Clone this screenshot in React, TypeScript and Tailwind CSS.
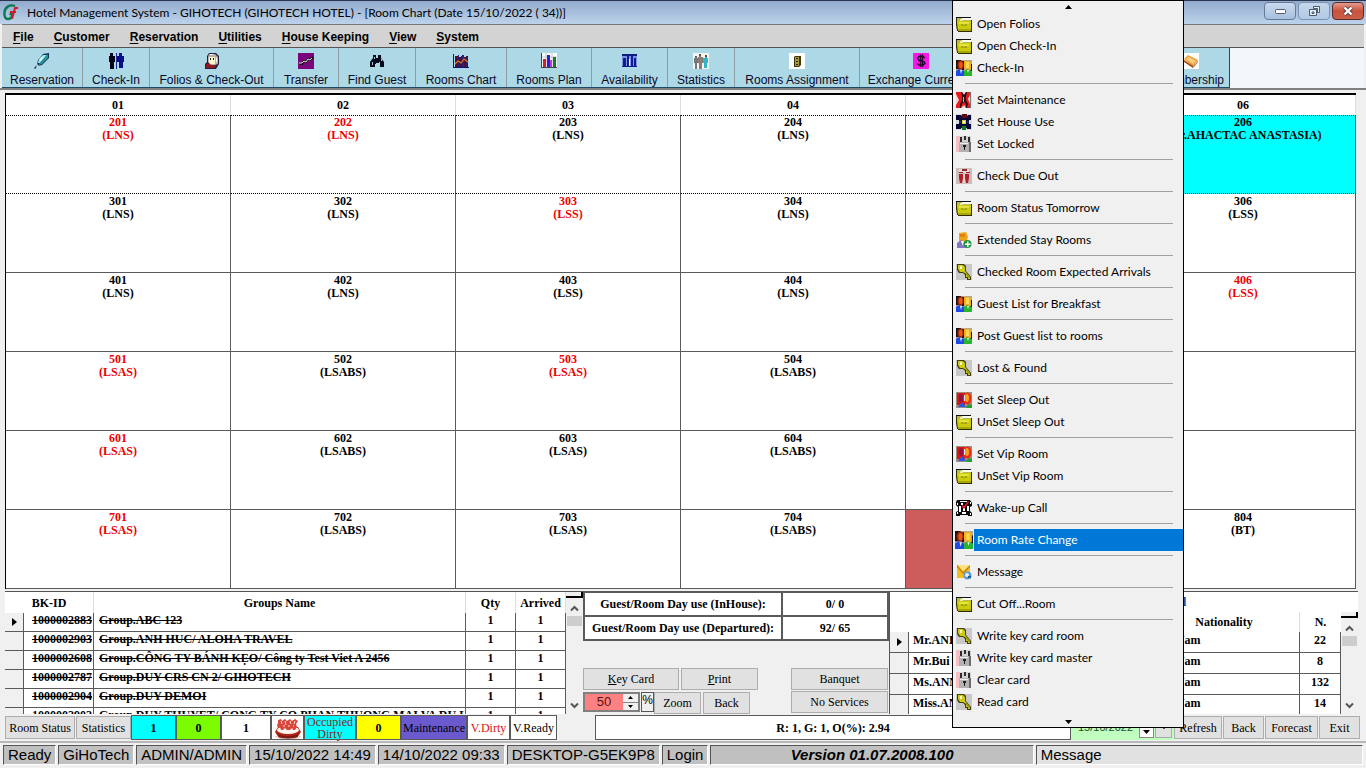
import React from "react";

type IconName =
  | "folder" | "people" | "tools" | "house" | "lock" | "due" | "extend"
  | "key" | "sleep" | "phone" | "mail";

function MenuIcon({ name, large }: { name: IconName; large?: boolean }) {
  const size = large ? 18 : 16;
  const common = { width: size, height: size, viewBox: "0 0 16 16", "aria-hidden": true } as const;
  switch (name) {
    case "folder":
      return (
        <svg {...common}>
          <path d="M0 1h15v1h-15z" fill="#101018" />
          <path d="M1 2h14v5h-14z" fill="#b9b84a" />
          <path d="M6 2h9v2h-9z" fill="#fdfdf0" />
          <path d="M4 3h3v2h-3z" fill="#e9e9b0" />
          <path d="M1 5h14v10h-13l-1-3z" fill="#cccb0e" />
          <path d="M3 6h10v2h-10z" fill="#e4e23c" />
          <path d="M0 2h1v5l1 8h-1l-1-6z" fill="#2f2f06" />
          <path d="M15 4h1v11h-1zM2 15h14v1h-14z" fill="#2f2f06" />
          <path d="M5 8h2v1h2v-1h2v2h-6z" fill="#a5a412" />
          <path d="M2 13h13v2h-13z" fill="#a8a70a" />
        </svg>
      );
    case "people":
      return (
        <svg {...common}>
          <path d="M0 0h16v16h-16z" fill="#b7a78e" />
          <path d="M0 0h5v4l-2 5h-3zM6 1h2v9h-2zM14 4h2v8h-2z" fill="#16110e" />
          <ellipse cx="4.500" cy="5" rx="3.200" ry="4.500" fill="#9c2506" />
          <ellipse cx="4.800" cy="5" rx="1.800" ry="3.200" fill="#e65a12" />
          <path d="M8 1h6l1 3v6h-6l-1-4z" fill="#f6b012" />
          <path d="M10 2h3v6h-3z" fill="#ffd75a" />
          <path d="M0 16v-5l3-2 5 2v5z" fill="#1d49e6" />
          <path d="M8 16v-5l3-2 5 2v5z" fill="#27b52d" />
          <path d="M4 10h2l-1 4zM11 10h2l-1 3z" fill="#e8f4ff" />
        </svg>
      );
    case "sleep":
      return (
        <svg {...common}>
          <path d="M0 0h16v16h-16z" fill="#9c8e86" />
          <path d="M1 1h8v12h-8z" fill="#d91712" />
          <ellipse cx="11.500" cy="6.500" rx="4" ry="6" fill="#e62f13" />
          <ellipse cx="11" cy="6" rx="2" ry="4" fill="#ff9e19" />
          <ellipse cx="5" cy="6" rx="2" ry="4" fill="#8b1740" />
          <path d="M2 15l4-5 4 5z" fill="#2757ea" />
          <path d="M10 15l3-3 3 1v3h-6z" fill="#239d34" />
          <path d="M8 3h1v6h-1z" fill="#dcdde8" />
        </svg>
      );
    case "tools":
      return (
        <svg {...common}>
          <path d="M0 0h16v16h-16z" fill="#f0d9da" />
          <path d="M0 0h6l2 3 2-3h4v3l-2 4 2 5v4h-4l-2-3-3 3h-5v-3l3-5-3-6z" fill="#ee1720" />
          <path d="M5 0h1l2 3 2-3h1l-1 5v3l2 4-1 4h-1v-4l-2-2-2 2-1 4h-1v-4l2-4v-4z" fill="#251012" />
          <path d="M7 5h1v5h-1z" fill="#e7a05a" />
          <path d="M14 0h1v16h-1z" fill="#777" />
        </svg>
      );
    case "house":
      return (
        <svg {...common}>
          <path d="M0 0h16v16h-16z" fill="#d9dade" />
          <path d="M0 1h5l1 1h5l1-1h3v5h-2v4h2v5h-4v-1h-6v1h-5v-5h3v-4h-3z" fill="#07073a" />
          <path d="M6 0h5v4h-5z" fill="#5d0b12" />
          <path d="M6 12h4v4h-4z" fill="#0e7a1d" />
          <path d="M6 6h4v4h-4z" fill="#d8d22c" />
          <path d="M7 7h2v2h-2z" fill="#fff" />
          <path d="M3 7h2v2h-2zM11 7h2v2h-2z" fill="#2a2a70" />
        </svg>
      );
    case "lock":
      return (
        <svg {...common}>
          <path d="M0 0h4v16h-4z" fill="#f6bfc3" />
          <path d="M4 0h11v6h-11z" fill="#d5d2d2" />
          <path d="M4 1h2v5h-2zM8 0h2v4h-2zM12 1h2v5h-2z" fill="#2d2d30" />
          <path d="M3 6h12v10h-12z" fill="#b3b1b1" />
          <path d="M4 7h8v1h-8z" fill="#eee" />
          <path d="M7 9h3v2h-1v3h-1v-3h-1z" fill="#1b1b1b" />
          <path d="M13 6h2v10h-2z" fill="#6d6b6b" />
        </svg>
      );
    case "due":
      return (
        <svg {...common}>
          <path d="M0 0h16v16h-16z" fill="#ccbcba" />
          <path d="M3 1h10v4h-10z" fill="#e5ddda" />
          <path d="M6 1h5v2h-5zM3 4h4v1h-4zM10 4h4v1h-4z" fill="#96272c" />
          <path d="M3 6h4v4l-1 5h-2l-1-5zM9 6h4v4l-1 5h-2l-1-5z" fill="#b02029" />
          <path d="M7 6h2v9h-2z" fill="#e7d3d0" />
        </svg>
      );
    case "extend":
      return (
        <svg {...common}>
          <path d="M3 1l7-1 2 5-2 6-7-1z" fill="#f2a313" />
          <path d="M4 2h5v3h-5z" fill="#e17f12" />
          <path d="M1 11l4-3 5 2v6h-9z" fill="#8475c9" />
          <path d="M5 9h3l-1 5z" fill="#fff" />
          <circle cx="11.500" cy="12" r="4" fill="#1f9640" />
          <path d="M11 9.500h1.500v2h2v1.500h-2v2h-1.500v-2h-2v-1.500h2z" fill="#fff" />
        </svg>
      );
    case "key":
      return (
        <svg {...common}>
          <path d="M0 0h16v16h-16z" fill="#c8c8ca" />
          <path d="M1 0h7l2 2v5l5 6v3h-4v-2h-2v-3l-2-2h-4l-2-3z" fill="#3f3f0a" />
          <path d="M2 1h5l2 2v4l5 6v2h-2v-2h-2v-3l-3-2h-3l-2-3z" fill="#cfca18" />
          <path d="M4 2h2v3h-2z" fill="#f6f5c6" />
          <path d="M10 9l4 5h-1l-4-5z" fill="#7f7b0e" />
        </svg>
      );
    case "phone":
      return (
        <svg {...common}>
          <path d="M1 0h13l2 3v3l-2 1v4l2 2v3h-4v-1h-8v1h-4v-4l2-1v-4l-2-2v-3z" fill="#0a0a0a" />
          <path d="M4 1h7v1h-7zM3 6h2v6h-2zM11 6h2v5h-2zM1 3h1v2h-1zM5 3h2v2h-2zM6 12h4v2h-4zM7 7h2v4h-2zM14 2h1v2h-1zM1 12h1v2h-1zM14 13h1v2h-1z" fill="#fff" />
          <path d="M6 5l2 1 4-5 1 1-5 7-2-2z" fill="#e11c21" />
        </svg>
      );
    case "mail":
      return (
        <svg {...common}>
          <path d="M1 1h13v13h-13z" fill="#f4bd1d" />
          <path d="M1 1l6 7 7-7v2l-7 7-6-7z" fill="#b98114" />
          <path d="M2 1h12l-7 6z" fill="#ffe282" />
          <circle cx="11.500" cy="11.500" r="4" fill="#5e9cd5" />
          <circle cx="11" cy="11" r="2" fill="#e4f2fd" />
          <path d="M12 12h3v2h-3z" fill="#225c9c" />
        </svg>
      );
  }
}

type ToolName =
  | "pen" | "checkin" | "guest" | "transfer" | "find" | "chart" | "plan"
  | "avail" | "stats" | "assign" | "money" | "member";

function ToolIcon({ name }: { name: ToolName }) {
  const common = { width: 16, height: 16, viewBox: "0 0 16 16", "aria-hidden": true } as const;
  switch (name) {
    case "pen":
      return (
        <svg {...common}>
          <path d="M9 1l6-1v5l-7 7-4 1-3 3-1-1 3-3 1-5z" fill="#17305a" />
          <path d="M9 2h4l-7 8h-2l1-4z" fill="#8ff0ea" />
          <path d="M14 1v4l-6 6-3 1v-1z" fill="#2c8f98" />
          <path d="M6 6l3-3-1 3-2 2z" fill="#fff" />
          <path d="M3 11l2 2-3 2z" fill="#cdd6e0" />
        </svg>
      );
    case "checkin":
      return (
        <svg {...common}>
          <path d="M2 0h3v3h2v6h-1v7h-4v-7h-1v-6h1z" fill="#020214" />
          <path d="M11 0h3v3h2v6h-1v6h-4v-6h-2v-6h2z" fill="#0a0f86" />
          <path d="M8 0h1v16h-1z" fill="#1c2aa0" />
        </svg>
      );
    case "guest":
      return (
        <svg {...common}>
          <path d="M5 0h7l3 3v8l-3 5h-11v-5l2-2v-6z" fill="#1d2042" />
          <path d="M5 1h6l3 3v7l-3 1h-5l-2-3v-5z" fill="#b8b1a3" />
          <path d="M5 4h6v7h-5l-1-2z" fill="#fbf6cf" />
          <path d="M6 5h1v2h-1zM9 5h1v2h-1z" fill="#222" />
          <path d="M2 11l3-1 2 2h5l-1 3h-9z" fill="#8e1720" />
          <path d="M6 1h3v1h-3zM12 5h1v4h-1z" fill="#fff" />
        </svg>
      );
    case "transfer":
      return (
        <svg {...common}>
          <path d="M0 0h16v16h-16z" fill="#7a067a" />
          <path d="M2 11h2l2-3 2 1 2-3 2 1 3-3" fill="none" stroke="#111" strokeWidth="2" />
          <path d="M1 10h3l2-2 2 1 2-3 2 1 2-2" fill="none" stroke="#ddd" />
        </svg>
      );
    case "find":
      return (
        <svg {...common}>
          <path d="M4 2h3v3h2v-3h3v3l3 4v5h-4v-3h-1v-1h-3v1h-1v3h-5v-5l3-4z" fill="#060a1c" />
          <path d="M3 9h1v3h-1zM10 9h1v3h-1zM5 4h1v2h-1zM12 6h1v2h-1z" fill="#a7cbd7" />
        </svg>
      );
    case "chart":
      return (
        <svg {...common}>
          <path d="M0 1h1v13h15v1h-16z" fill="#12126e" />
          <path d="M2 3h13v11h-13z" fill="#5a0a28" />
          <path d="M5 2h1v12h-1zM9 2h2v12h-2zM13 4h1v10h-1z" fill="#23237d" />
          <path d="M6 1h2v3h-2zM11 2h2v2h-2z" fill="#add8e6" />
          <path d="M2 11l3-3 3 2 3-4 4 3" fill="none" stroke="#e2791f" strokeWidth="1.200" />
        </svg>
      );
    case "plan":
      return (
        <svg {...common}>
          <path d="M1 0h15v14h-15z" fill="#fff" />
          <path d="M1 4h15M1 8h15M5 0v14M11 0v14" stroke="#c4c4c4" strokeWidth="1" />
          <path d="M0 0h1v14h15v1h-16z" fill="#444" />
          <path d="M2 6h3v8h-3z" fill="#d81e2e" />
          <path d="M6 2h3v12h-3z" fill="#2323d9" />
          <path d="M9 7h2v7h-2z" fill="#d92fd9" />
          <path d="M12 4h3v10h-3z" fill="#0b7e27" />
        </svg>
      );
    case "avail":
      return (
        <svg {...common}>
          <path d="M0 1h15v13h-15z" fill="#7f92dd" />
          <path d="M0 1h15v2h-15zM0 13h15v1h-15z" fill="#141b7e" />
          <path d="M1 5h3v8h-3zM5 3h2v11h-2zM9 2h2v12h-2zM12 5h2v8h-2z" fill="#101b96" />
          <path d="M7 6h1v7h-1z" fill="#fff" />
        </svg>
      );
    case "stats":
      return (
        <svg {...common}>
          <path d="M0 0h16v16h-16z" fill="#f4f4f4" />
          <path d="M2 3h2v2h1v5h-1v6h-2v-6h-1v-5h1z" fill="#777" />
          <path d="M6 1h2v3h2v6h-1v6h-3v-6h-1v-6h1z" fill="#8a7f78" />
          <path d="M12 2h2v3h1v5h-1v5h-3v-5h-1v-5h2z" fill="#2fb6c8" />
          <path d="M6 1h2v2h-2zM12 2h2v2h-2zM2 3h2v1h-2z" fill="#704b3d" />
        </svg>
      );
    case "assign":
      return (
        <svg {...common}>
          <path d="M0 0h16v16h-16z" fill="#fff" />
          <path d="M6 3h6v9l-2 2h-5v-10z" fill="#3b3708" />
          <path d="M6 4h4v9h-4z" fill="#a79a38" />
          <path d="M7 5h2v1h-2zM7 8h2v1h-2zM7 11h2v1h-2z" fill="#222" />
        </svg>
      );
    case "money":
      return (
        <svg {...common}>
          <path d="M0 0h16v16h-16z" fill="#f916e8" />
          <path d="M12 5l-2-1.500h-4l-1.500 1.500 1.500 2.500 5 1 1 2-2 1.500h-4l-2-1.500M7.500 1.500v12.500M9.500 1.500v12.500" fill="none" stroke="#25042b" strokeWidth="1.400" />
        </svg>
      );
    case "member":
      return (
        <svg {...common}>
          <path d="M0 0h16v16h-16z" fill="#fff" />
          <path d="M1 6l4-4 10 5-5 7z" fill="#efa13c" />
          <path d="M3 6l3-2 7 4-3 3z" fill="#f9cf7b" />
          <path d="M1 7l9 6v2l-9-6zM10 14l5-6v1l-5 6z" fill="#9c4a1a" />
        </svg>
      );
  }
}

type MenuEntry = { label: string; icon: IconName; active?: boolean };

const menuGroups: MenuEntry[][] = [
  [
    { label: "Open Folios", icon: "folder" },
    { label: "Open Check-In", icon: "folder" },
    { label: "Check-In", icon: "people" },
  ],
  [
    { label: "Set Maintenance", icon: "tools" },
    { label: "Set House Use", icon: "house" },
    { label: "Set Locked", icon: "lock" },
  ],
  [{ label: "Check Due Out", icon: "due" }],
  [{ label: "Room Status Tomorrow", icon: "folder" }],
  [{ label: "Extended Stay Rooms", icon: "extend" }],
  [{ label: "Checked Room Expected Arrivals", icon: "key" }],
  [{ label: "Guest List for Breakfast", icon: "people" }],
  [{ label: "Post Guest list to rooms", icon: "people" }],
  [{ label: "Lost & Found", icon: "key" }],
  [
    { label: "Set Sleep Out", icon: "sleep" },
    { label: "UnSet Sleep Out", icon: "folder" },
  ],
  [
    { label: "Set Vip Room", icon: "sleep" },
    { label: "UnSet Vip Room", icon: "folder" },
  ],
  [{ label: "Wake-up Call", icon: "phone" }],
  [{ label: "Room Rate Change", icon: "people", active: true }],
  [{ label: "Message", icon: "mail" }],
  [{ label: "Cut Off...Room", icon: "folder" }],
  [
    { label: "Write key card room", icon: "key" },
    { label: "Write key card master", icon: "lock" },
    { label: "Clear card", icon: "lock" },
    { label: "Read card", icon: "key" },
  ],
];

function ContextMenu() {
  return (
    <nav
      aria-label="Room actions"
      className="absolute left-[952px] top-0 z-10 flex w-[232px] flex-col border border-black bg-[#f0f0f0] font-[Lato,'Noto_Sans',sans-serif] text-xs text-black"
    >
      <button aria-label="Scroll up" className="flex h-3 items-center justify-center">
        <svg width="7" height="4" viewBox="0 0 7 4" aria-hidden="true"><path d="M0 4l3.500-4 3.500 4z" fill="#000" /></svg>
      </button>
      {menuGroups.map((group, i) => (
        <React.Fragment key={i}>
          {i > 0 && (
            <div className="h-[10px] pl-3 pr-[10px] pt-1">
              <hr className="border-0 border-t border-[#a0a0a0]" />
            </div>
          )}
          {group.map((item) => (
            <button key={item.label} className="flex h-[22px] w-full items-center text-left">
              <span className="flex w-[21px] justify-center">
                <MenuIcon name={item.icon} large={item.active} />
              </span>
              <span
                className={
                  item.active
                    ? "flex h-[22px] flex-1 items-center bg-[#0078d7] pl-[3px] text-white"
                    : "flex h-[22px] flex-1 items-center pl-[3px]"
                }
              >
                {item.label}
              </span>
            </button>
          ))}
        </React.Fragment>
      ))}
      <button aria-label="Scroll down" className="flex h-[14px] items-center justify-center pt-1">
        <svg width="7" height="4" viewBox="0 0 7 4" aria-hidden="true"><path d="M0 0h7l-3.500 4z" fill="#000" /></svg>
      </button>
    </nav>
  );
}

function TitleBar() {
  return (
    <header className="flex h-6 items-center border-t border-[#27364f] bg-linear-to-b from-[#93abcc] to-[#bdd3ec] pl-[2px] pr-[2px]">
      <svg width="16" height="17" viewBox="0 0 16 17" aria-hidden="true">
        <path d="M13 2c-5-2-10 1-10.500 6s1 7 3.500 7c3 0 4-2 4.500-5h-3" fill="none" stroke="#087b50" strokeWidth="2.400" />
        <path d="M10 15l3-11h3M8 8h6" fill="none" stroke="#d21c2c" strokeWidth="2" />
      </svg>
      <h1 className="flex-1 pl-[9px] font-[Lato,'Noto_Sans',sans-serif] text-xs text-black">
        Hotel Management System - GIHOTECH (GIHOTECH HOTEL) - [Room Chart (Date 15/10/2022 ( 34))]
      </h1>
      <div className="flex gap-[2px] self-start pt-[1px]">
        <button aria-label="Minimize" className="flex h-[18px] w-8 items-center justify-center rounded-sm border border-[#65799a] bg-linear-to-b from-[#c9daee] to-[#a7bfdc]">
          <svg width="11" height="5" viewBox="0 0 11 5" aria-hidden="true"><rect x=".5" y=".5" width="10" height="4" rx="1" fill="#fff" stroke="#4d5a6c" /></svg>
        </button>
        <button aria-label="Restore" className="flex h-[18px] w-8 items-center justify-center rounded-sm border border-[#7e93b3] bg-linear-to-b from-[#c4d6eb] to-[#b2c9e4]">
          <svg width="13" height="12" viewBox="0 0 13 12" aria-hidden="true">
            <path d="M5.500 1.500h6v6h-2v-4h-4z" fill="#e9f0f8" stroke="#4d5a6c" />
            <path d="M1.500 4.500h7v6h-7zM4 7h2v1.500h-2z" fill="#e9f0f8" stroke="#4d5a6c" />
          </svg>
        </button>
        <button aria-label="Close" className="flex h-[18px] w-8 items-center justify-center rounded-sm border border-[#5c2a2a] bg-linear-to-b from-[#e29a8c] via-[#c9503d] to-[#c8604a]">
          <svg width="12" height="10" viewBox="0 0 12 10" aria-hidden="true">
            <path d="M2.500 1.500l7 7M9.500 1.500l-7 7" stroke="#5d3b3b" strokeWidth="4" />
            <path d="M2.500 1.500l7 7M9.500 1.500l-7 7" stroke="#fff" strokeWidth="2.400" />
          </svg>
        </button>
      </div>
    </header>
  );
}

const menus = ["File", "Customer", "Reservation", "Utilities", "House Keeping", "View", "System"];

function MenuBar() {
  return (
    <nav aria-label="Main menu" className="mx-[2px] flex h-6 items-center gap-5 border-b border-t border-b-[#555] border-t-[#777] bg-[#d3d3d3] pl-[11px] pt-[1px] font-['Liberation_Sans',sans-serif] text-xs font-bold">
      {menus.map((m) => (
        <button key={m}>
          <span className="underline underline-offset-2">{m[0]}</span>
          {m.slice(1)}
        </button>
      ))}
    </nav>
  );
}

const tools: { label: string; icon: ToolName }[] = [
  { label: "Reservation", icon: "pen" },
  { label: "Check-In", icon: "checkin" },
  { label: "Folios & Check-Out", icon: "guest" },
  { label: "Transfer", icon: "transfer" },
  { label: "Find Guest", icon: "find" },
  { label: "Rooms Chart", icon: "chart" },
  { label: "Rooms Plan", icon: "plan" },
  { label: "Availability", icon: "avail" },
  { label: "Statistics", icon: "stats" },
  { label: "Rooms Assignment", icon: "assign" },
  { label: "Exchange Currency", icon: "money" },
];

function ToolBar() {
  return (
    <div className="mx-[2px] bg-[#f3f6fb] font-['Liberation_Sans',sans-serif] text-xs text-[#0a0a28]">
      <div className="grid h-10 w-[1228px] grid-cols-[81px_67px_124px_65px_77px_91px_85px_76px_67px_125px_122px_1fr] border-b border-r border-[#1d4a66] bg-[#add8e6]">
        {tools.map((t) => (
          <button key={t.label} className="flex flex-col items-center border-r border-[#8d9ba5] pt-[5px]">
            <ToolIcon name={t.icon} />
            <span className="pt-1 leading-[14px]">{t.label}</span>
          </button>
        ))}
        <button className="ml-auto flex flex-col items-center px-[5px] pt-[5px]">
          <ToolIcon name="member" />
          <span className="pt-1 leading-[14px]">Membership</span>
        </button>
      </div>
    </div>
  );
}

type Room = { no?: string; note?: string; tone?: "red" | "cyan" | "fill" };

const roomRows: Room[][] = [
  [
    { no: "201", note: "(LNS)", tone: "red" },
    { no: "202", note: "(LNS)", tone: "red" },
    { no: "203", note: "(LNS)" },
    { no: "204", note: "(LNS)" },
    {},
    { no: "206", note: "(Mr.AHACTAC ANASTASIA)", tone: "cyan" },
  ],
  [
    { no: "301", note: "(LNS)" },
    { no: "302", note: "(LNS)" },
    { no: "303", note: "(LSS)", tone: "red" },
    { no: "304", note: "(LNS)" },
    {},
    { no: "306", note: "(LSS)" },
  ],
  [
    { no: "401", note: "(LNS)" },
    { no: "402", note: "(LNS)" },
    { no: "403", note: "(LSS)" },
    { no: "404", note: "(LNS)" },
    {},
    { no: "406", note: "(LSS)", tone: "red" },
  ],
  [
    { no: "501", note: "(LSAS)", tone: "red" },
    { no: "502", note: "(LSABS)" },
    { no: "503", note: "(LSAS)", tone: "red" },
    { no: "504", note: "(LSABS)" },
    {},
    {},
  ],
  [
    { no: "601", note: "(LSAS)", tone: "red" },
    { no: "602", note: "(LSABS)" },
    { no: "603", note: "(LSAS)" },
    { no: "604", note: "(LSABS)" },
    {},
    {},
  ],
  [
    { no: "701", note: "(LSAS)", tone: "red" },
    { no: "702", note: "(LSABS)" },
    { no: "703", note: "(LSAS)" },
    { no: "704", note: "(LSABS)" },
    { tone: "fill" },
    { no: "804", note: "(BT)" },
  ],
];

const toneClass = {
  red: "text-[#f00000]",
  cyan: "bg-[#00ffff]",
  fill: "bg-[#cd5c5c]",
};

function RoomChart() {
  return (
    <section className="border-t-2 border-[#808080] pl-[5px] pr-[10px] pt-[3px]">
      <table className="w-full table-fixed border-separate border-spacing-0 border-l border-t-2 border-black bg-white text-center text-xs font-bold">
        <thead>
          <tr className="h-[20px]">
            {["01", "02", "03", "04", "", "06"].map((h, i) => (
              <th key={i} scope="col" className="border-r border-[#ddd] p-0">{h}</th>
            ))}
          </tr>
        </thead>
        <tbody>
          {roomRows.map((row, r) => (
            <tr key={r} className="h-[79px]">
              {row.map((room, c) => (
                <td
                  key={c}
                  className={`border-r border-b border-r-[#5a5a5a] p-0 align-top leading-[13px] ${
                    r === 0 ? "border-b-black border-t [border-top-style:dotted] [border-bottom-style:dotted] border-t-black" : "border-b-[#5a5a5a] pt-[1px]"
                  } ${room.tone ? toneClass[room.tone] : ""}`}
                >
                  <div>{room.no}</div>
                  <div className="whitespace-nowrap">{room.note}</div>
                </td>
              ))}
            </tr>
          ))}
        </tbody>
      </table>
    </section>
  );
}

function ScrollRail() {
  return (
    <div aria-hidden="true" className="flex w-[17px] shrink-0 flex-col items-center bg-[#f0f0f0]">
      <div className="h-[6px] w-full border-b-2 border-r-2 border-black bg-[#f0f0f0]" />
      <svg className="mt-[6px] shrink-0" width="9" height="9" viewBox="0 0 9 9"><path d="M1 6.500l3.500-3.500 3.500 3.500" fill="none" stroke="#555" strokeWidth="2" /></svg>
      <div className="mt-[3px] h-[10px] w-[15px] bg-[#cdcdcd]" />
      <svg className="mb-1 mt-auto shrink-0" width="9" height="9" viewBox="0 0 9 9"><path d="M1 2.500l3.500 3.500 3.500-3.500" fill="none" stroke="#555" strokeWidth="2" /></svg>
    </div>
  );
}

const groups = [
  ["1000002883", "Group.ABC 123"],
  ["1000002903", "Group.ANH HUC/ ALOHA TRAVEL"],
  ["1000002608", "Group.CÔNG TY BÁNH KẸO/ Công ty Test Viet A 2456"],
  ["1000002787", "Group.DUY CRS CN 2/ GIHOTECH"],
  ["1000002904", "Group.DUY DEMOI"],
  ["1000002902", "Group.DUY THUYET/ CONG TY CO PHAN THUONG MAI VA DU LIC"],
];

function RowMarker() {
  return (
    <svg className="mx-auto" width="5" height="8" viewBox="0 0 5 8" aria-hidden="true"><path d="M0 0l5 4-5 4z" fill="#000" /></svg>
  );
}

function GroupsPanel() {
  return (
    <div className="flex w-[578px] shrink-0 border-t border-[#555] bg-white">
      <div className="h-full flex-1 overflow-hidden">
        <table className="w-full table-fixed border-separate border-spacing-0 text-xs font-bold">
          <colgroup>
            <col className="w-[19px]" />
            <col className="w-[70px]" />
            <col />
            <col className="w-[50px]" />
            <col className="w-[50px]" />
          </colgroup>
          <thead>
            <tr className="h-[21px]">
              <th scope="col" colSpan={2} className="border-r border-[#ddd] p-0">BK-ID</th>
              {["Groups Name", "Qty", "Arrived"].map((h) => (
                <th key={h} scope="col" className="border-r border-[#ddd] p-0">{h}</th>
              ))}
            </tr>
          </thead>
          <tbody>
            {groups.map(([id, name], i) => (
              <tr key={id} className="h-[19px] [&>td]:border-b [&>td]:border-r [&>td]:border-[#5a5a5a] [&>td]:p-0 [&>td]:leading-[15px] [&>td]:align-top">
                <td className="bg-[#f0f0f0] pt-[5px]!">{i === 0 && <RowMarker />}</td>
                <td className="whitespace-nowrap pr-[1px]! text-right line-through">{id}</td>
                <td className="overflow-hidden whitespace-nowrap pl-[5px]! line-through">{name}</td>
                <td className="text-center">1</td>
                <td className="text-center">1</td>
              </tr>
            ))}
          </tbody>
        </table>
      </div>
      <ScrollRail />
    </div>
  );
}

const btn = "flex items-center justify-center border border-[#adadad] bg-[#e1e1e1] whitespace-nowrap";

function DayUsePanel() {
  return (
    <div className="flex w-[306px] shrink-0 flex-col bg-[#f0f0f0]">
      <table className="w-full table-fixed border-collapse text-center text-xs font-bold [&_td]:border-2 [&_td]:border-[#5a5a5a] [&_td]:bg-white [&_td]:p-0 [&_th]:border-2 [&_th]:border-[#5a5a5a] [&_th]:bg-white [&_th]:p-0">
        <colgroup>
          <col />
          <col className="w-[106px]" />
        </colgroup>
        <tbody>
          <tr className="h-6"><th scope="row">Guest/Room Day use (InHouse):</th><td>0/ 0</td></tr>
          <tr className="h-6"><th scope="row">Guest/Room Day use (Departured):</th><td>92/ 65</td></tr>
        </tbody>
      </table>
      <div className="mt-auto flex justify-between pr-[1px] text-xs">
        <div className="flex w-[175px] flex-col gap-[2px]">
          <div className="flex gap-[2px]">
            <button className={`${btn} h-[22px] w-[96px]`}><span><span className="underline">K</span>ey Card</span></button>
            <button className={`${btn} h-[22px] flex-1`}><span><span className="underline">P</span>rint</span></button>
          </div>
          <div className="flex h-[22px]">
            <div className="flex h-5 w-[57px] border-2 border-[#808080] bg-[#f0f0f0]">
              <input aria-label="Zoom percent" defaultValue="50" className="w-[38px] min-w-0 bg-[#ff8080] text-center font-['Liberation_Sans',sans-serif] text-[13px] leading-4 text-[#5a1010]" />
              <div className="flex flex-1 flex-col">
                <button aria-label="Increase" className="flex flex-1 items-center justify-center border-b border-[#888]"><svg width="5" height="3" viewBox="0 0 5 3"><path d="M0 3l2.500-3 2.500 3z" /></svg></button>
                <button aria-label="Decrease" className="flex flex-1 items-center justify-center"><svg width="5" height="3" viewBox="0 0 5 3"><path d="M0 0h5l-2.500 3z" /></svg></button>
              </div>
            </div>
            <span className="ml-[1px] flex h-5 w-[13px] justify-center border border-[#555] bg-[#f0f0f0] font-['Liberation_Sans',sans-serif] leading-[14px]">%</span>
            <button className={`${btn} h-[22px] w-[47px]`}>Zoom</button>
            <button className={`${btn} ml-[2px] h-[22px] w-[47px]`}>Back</button>
          </div>
        </div>
        <div className="flex w-[97px] flex-col gap-[1px]">
          <button className={`${btn} h-[22px]`}>Banquet</button>
          <button className={`${btn} h-[22px]`}>No Services</button>
        </div>
      </div>
    </div>
  );
}

const guests = [
  ["Mr.ANH", "22"],
  ["Mr.Bui I", "8"],
  ["Ms.ANN", "132"],
  ["Miss.AN", "14"],
];

function GuestsPanel() {
  return (
    <div className="flex min-w-0 flex-1 flex-col border-l border-t border-[#555] bg-white">
      <div className="flex h-5 shrink-0 items-center pl-[293px] text-xs font-bold text-[#0a4a9c]">l</div>
      <div className="flex min-h-0 flex-1">
        <div className="min-w-0 flex-1 overflow-hidden">
          <table className="w-full table-fixed border-separate border-spacing-0 text-xs font-bold">
            <colgroup>
              <col className="w-[19px]" />
              <col />
              <col className="w-[151px]" />
              <col className="w-[41px]" />
            </colgroup>
            <thead>
              <tr className="h-5">
                <th className="p-0" />
                <th className="p-0" />
                <th scope="col" className="border-r border-[#ddd] p-0">Nationality</th>
                <th scope="col" className="p-0">N.</th>
              </tr>
            </thead>
            <tbody>
              {guests.map(([name, n], i) => (
                <tr key={name} className="h-[21px] [&>td]:border-b [&>td]:border-r [&>td]:border-[#5a5a5a] [&>td]:p-0 [&>td]:align-top [&>td]:leading-[17px]">
                  <td className="bg-[#f0f0f0] pt-[6px]!">{i === 0 && <RowMarker />}</td>
                  <td className="pl-1!">{name}</td>
                  <td className="pl-[3px]!">Viet Nam</td>
                  <td className="text-center">{n}</td>
                </tr>
              ))}
            </tbody>
          </table>
        </div>
        <ScrollRail />
      </div>
    </div>
  );
}

function Cake() {
  return (
    <svg width="28" height="22" viewBox="0 0 28 22" aria-hidden="true">
      <path d="M1 15l3-5h20l3 5-4 6-9 1-9-1z" fill="#b5241a" />
      <ellipse cx="14" cy="13" rx="11" ry="4" fill="#fff4ee" />
      <path d="M4 3l3-1 1 2 3-2 2 2 3-2 2 2 3-2 3 2-2 3 1 3-2 3h-2l-1-2-2 2h-3l-2-2-2 2h-2l-1-3-2 1-1-3 1-2z" fill="#d9453a" />
      <path d="M7 4l1 3M11 4l1 4M16 4l1 3M21 4l-1 3M9 9h2M14 9h2M19 9h1" stroke="#fbe0da" />
      <path d="M3 16c4 4 18 4 22 0l-2 4-9 2-9-2z" fill="#7c1c12" />
      <path d="M1 19c5 4 21 4 26 0" fill="none" stroke="#d9b7b0" />
    </svg>
  );
}

function ControlRow() {
  const cell = "flex items-center justify-center border-y border-l border-r border-[#5a5a5a] whitespace-nowrap";
  return (
    <div className="flex h-[27px] items-stretch py-[1px] pl-[5px] pr-[6px] text-xs">
      <button className={`${btn} my-[1px] w-[70px]`}>Room Status</button>
      <button className={`${btn} my-[1px] ml-[1px] w-[55px]`}>Statistics</button>
      <div className={`${cell} w-[45px] bg-[#00ffff] font-bold`}>1</div>
      <div className={`${cell} w-[45px] bg-[#7cfc00] font-bold`}>0</div>
      <div className={`${cell} w-[50px] bg-white font-bold`}>1</div>
      <div className={`${cell} w-[33px] bg-white`}><Cake /></div>
      <div className={`${cell} w-[52px] whitespace-normal! bg-[#00ffff] text-center leading-3 text-[#8b1a1a]`}>Occupied Dirty</div>
      <div className={`${cell} w-[45px] bg-[#ffff00] font-bold`}>0</div>
      <div className={`${cell} w-[66px] bg-[#6a5acd]`}>Maintenance</div>
      <div className={`${cell} w-[43px] bg-white text-[#e01010]`}>V.Dirty</div>
      <div className={`${cell} w-[47px] bg-white`}>V.Ready</div>
      <div className={`${cell} ml-[38px] min-w-0 flex-1 bg-white font-bold`}>R: 1, G: 1, O(%): 2.94</div>
      <div className="flex w-[103px] items-center bg-[#c1ffc1]">
        <input aria-label="Date" defaultValue="15/10/2022" className="w-[68px] bg-[#c1ffc1] pl-[7px] font-['Liberation_Sans',sans-serif] text-[11px] text-[#2b4b2b]" />
        <button aria-label="Step date" className="flex h-5 w-[15px] items-center justify-center border border-[#888] bg-white pt-2"><svg width="7" height="4" viewBox="0 0 7 4"><path d="M0 0h7l-3.500 4z" /></svg></button>
        <button aria-label="Open calendar" className="ml-[1px] flex h-5 w-[17px] items-center justify-center border border-[#aaa] bg-[#e1e1e1]"><svg width="8" height="6" viewBox="0 0 8 6"><path d="M1 1l3 3 3-3" fill="none" stroke="#555" /></svg></button>
      </div>
      <button className={`${btn} my-[1px] w-[48px]`}>Refresh</button>
      <button className={`${btn} my-[1px] ml-[1px] w-[41px]`}>Back</button>
      <button className={`${btn} my-[1px] ml-[1px] w-[53px]`}>Forecast</button>
      <button className={`${btn} my-[1px] ml-[1px] w-[41px]`}>Exit</button>
    </div>
  );
}

const statusItems = ["Ready", "GiHoTech", "ADMIN/ADMIN", "15/10/2022 14:49", "14/10/2022 09:33", "DESKTOP-G5EK9P8", "Login"];

function StatusBar() {
  const panel = "flex items-center whitespace-nowrap border border-t-[#555] border-l-[#555] border-b-white border-r-white bg-[#c0c0c0]";
  return (
    <footer className="flex h-[27px] gap-[2px] border-t-2 border-[#b8b8b8] bg-[#f0f0f0] px-[3px] pb-[3px] pt-[2px] font-['Liberation_Sans',sans-serif] text-[15px]">
      {statusItems.map((s) => (
        <div key={s} className={`${panel} px-1`}>{s}</div>
      ))}
      <div className={`${panel} flex-1 justify-center font-bold italic`}>Version 01.07.2008.100</div>
      <div className={`${panel} flex-1 bg-[#e1e1e1]! pl-1`}>Message</div>
    </footer>
  );
}

export default function App() {
  return (
    <div className="relative flex min-h-screen flex-col overflow-hidden bg-[#f0f0f0] font-['Liberation_Serif',serif] text-black">
      <TitleBar />
      <MenuBar />
      <ToolBar />
      <RoomChart />
      <main className="mt-[2px] flex h-[123px] pl-[5px] pr-2">
        <GroupsPanel />
        <DayUsePanel />
        <GuestsPanel />
      </main>
      <ControlRow />
      <StatusBar />
      <ContextMenu />
    </div>
  );
}
